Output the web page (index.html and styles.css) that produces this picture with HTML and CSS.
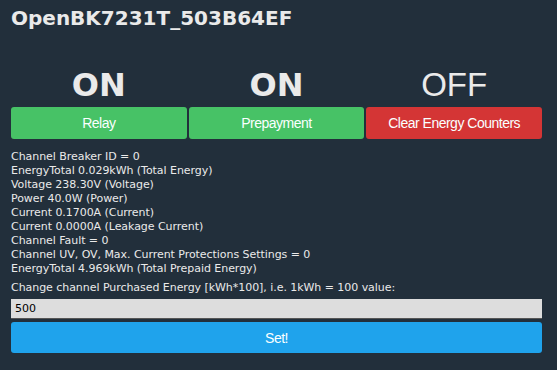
FILE: index.html
```html
<!DOCTYPE html>
<html lang="en">
<head>
  <meta charset="UTF-8" />
  <title>OpenBK7231T_503B64EF</title>
  <link rel="stylesheet" href="styles.css">
</head>
<body>
  <div class="page">
    <h3 class="devname">OpenBK7231T_503B64EF</h3>

    <div class="states">
      <div class="state on">ON</div>
      <div class="state on">ON</div>
      <div class="state off">OFF</div>
      <button class="btn green">Relay</button>
      <button class="btn green">Prepayment</button>
      <button class="btn red">Clear Energy Counters</button>
    </div>

    <div class="info">
      Channel Breaker ID = 0<br>
      EnergyTotal 0.029kWh (Total Energy)<br>
      Voltage 238.30V (Voltage)<br>
      Power 40.0W (Power)<br>
      Current 0.1700A (Current)<br>
      Current 0.0000A (Leakage Current)<br>
      Channel Fault = 0<br>
      Channel UV, OV, Max. Current Protections Settings = 0<br>
      EnergyTotal 4.969kWh (Total Prepaid Energy)
    </div>

    <form class="setform" onsubmit="return false">
      <label for="val">Change channel Purchased Energy [kWh*100], i.e. 1kWh = 100 value:</label>
      <input type="text" id="val" value="500" />
      <button class="btn blue">Set!</button>
    </form>
  </div>
</body>
</html>
```

FILE: styles.css
```css
body {
  background-color: #222f3b;
  color: #eaeaea;
  font-family: 'DejaVu Sans', Verdana, sans-serif;
  margin: 0;
  padding: 0;
}
.page {
  width: 531px;
  padding: 0 0 0 11px;
}
.devname {
  margin: 0;
  padding-top: 5px;
  font-size: 20px;
  font-weight: 700;
  line-height: 26px;
}
.states {
  display: grid;
  grid-template-columns: repeat(3, 1fr);
  column-gap: 2px;
  margin-top: 36px;
}
.state {
  text-align: center;
  font-size: 32px;
  line-height: 36px;
  height: 40px;
}
.state.on {
  font-weight: 700;
}
.state.off {
  font-family: 'Liberation Sans', Arial, sans-serif;
  font-weight: 400;
  font-size: 33px;
}
.btn {
  border: none;
  border-radius: 3px;
  color: #faffff;
  font-family: 'Liberation Sans', Arial, sans-serif;
  font-size: 14px;
  letter-spacing: -0.5px;
  height: 32px;
  padding: 0;
  width: 100%;
  cursor: pointer;
}
.green {
  background: #47c266;
}
.red {
  background: #d43535;
}
.blue {
  background: #1fa3ec;
  height: 31px;
}
.info {
  margin-top: 11px;
  font-size: 11px;
  line-height: 14px;
  letter-spacing: -0.05px;
}
.setform {
  margin: 5px 0 0 0;
}
.setform label {
  display: block;
  font-size: 11px;
  line-height: 14px;
  letter-spacing: -0.05px;
  margin-bottom: 4px;
}
.setform input {
  display: block;
  box-sizing: border-box;
  width: 100%;
  height: 20px;
  margin: 0 0 3px 0;
  border: none;
  border-bottom: 1px solid #555;
  background: #dddddd;
  color: #000;
  font-family: 'DejaVu Sans', Verdana, sans-serif;
  font-size: 11px;
  padding: 0 4px;
}
```
